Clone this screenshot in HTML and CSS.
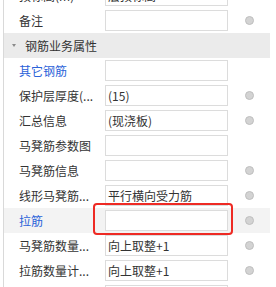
FILE: index.html
```html
<!DOCTYPE html>
<html lang="zh-CN">
<head>
    <meta charset="UTF-8">
    <meta name="viewport" content="width=device-width, initial-scale=1.0">
    <title>属性列表</title>
    <link rel="stylesheet" href="styles.css">
</head>
<body>
    <div class="panel">
        <div class="row">
            <span class="label">顶标高(m)</span>
            <div class="value">层顶标高</div>
            <span class="dot"></span>
        </div>
        <div class="row">
            <span class="label">备注</span>
            <div class="value"></div>
            <span class="dot"></span>
        </div>

        <div class="group">
            <span class="arrow"></span>
            <span>钢筋业务属性</span>
        </div>

        <div class="row">
            <span class="label blue">其它钢筋</span>
            <div class="value"></div>
        </div>
        <div class="row">
            <span class="label">保护层厚度(...</span>
            <div class="value">(15)</div>
            <span class="dot"></span>
        </div>
        <div class="row">
            <span class="label">汇总信息</span>
            <div class="value">(现浇板)</div>
            <span class="dot"></span>
        </div>
        <div class="row">
            <span class="label">马凳筋参数图</span>
            <div class="value"></div>
        </div>
        <div class="row">
            <span class="label">马凳筋信息</span>
            <div class="value"></div>
            <span class="dot"></span>
        </div>
        <div class="row">
            <span class="label">线形马凳筋...</span>
            <div class="value">平行横向受力筋</div>
            <span class="dot"></span>
        </div>
        <div class="row selected">
            <span class="label blue">拉筋</span>
            <div class="value"></div>
            <span class="dot"></span>
            <div class="mark"></div>
        </div>
        <div class="row">
            <span class="label">马凳筋数量...</span>
            <div class="value">向上取整+1</div>
            <span class="dot"></span>
        </div>
        <div class="row">
            <span class="label">拉筋数量计...</span>
            <div class="value">向上取整+1</div>
            <span class="dot"></span>
        </div>
        <div class="row">
            <span class="label"></span>
            <div class="value"></div>
        </div>
    </div>
</body>
</html>
```

FILE: styles.css
```css
body {
    margin: 0;
    background-color: #ffffff;
    font-family: "Noto Sans CJK SC", "Noto Sans", sans-serif;
    font-size: 12px;
    color: #333333;
    overflow: hidden;
}
.panel {
    margin-top: -17px;
    margin-left: 3px;
    width: 266px;
    border-left: 1px solid #d9d9d9;
}
.row {
    position: relative;
    display: grid;
    grid-template-columns: 101px 123px 1fr;
    align-items: center;
    height: 25px;
}
.row.selected {
    background-color: #f3f3f3;
}
.label {
    padding-left: 15px;
    white-space: nowrap;
    overflow: hidden;
}
.blue {
    color: #2a62d9;
}
.value {
    box-sizing: border-box;
    height: 21px;
    line-height: 19px;
    padding-left: 2px;
    border: 1px solid #dcdcdc;
    background-color: #ffffff;
    white-space: nowrap;
    overflow: hidden;
}
.dot {
    width: 7px;
    height: 7px;
    margin-left: 17px;
    border-radius: 50%;
    background-color: #d3d3d3;
    border: 1px solid #bfbfbf;
}
.group {
    display: flex;
    align-items: center;
    height: 25px;
    background-color: #ebebeb;
    color: #333333;
}
.arrow {
    width: 0;
    height: 0;
    margin-left: 8px;
    margin-right: 9px;
    border-left: 2.5px solid transparent;
    border-right: 2.5px solid transparent;
    border-top: 3px solid #8a8a8a;
}
.mark {
    position: absolute;
    left: 89px;
    top: -5px;
    width: 140px;
    height: 32px;
    box-sizing: border-box;
    border: 2px solid #ee2a24;
    border-radius: 4px;
}
```
